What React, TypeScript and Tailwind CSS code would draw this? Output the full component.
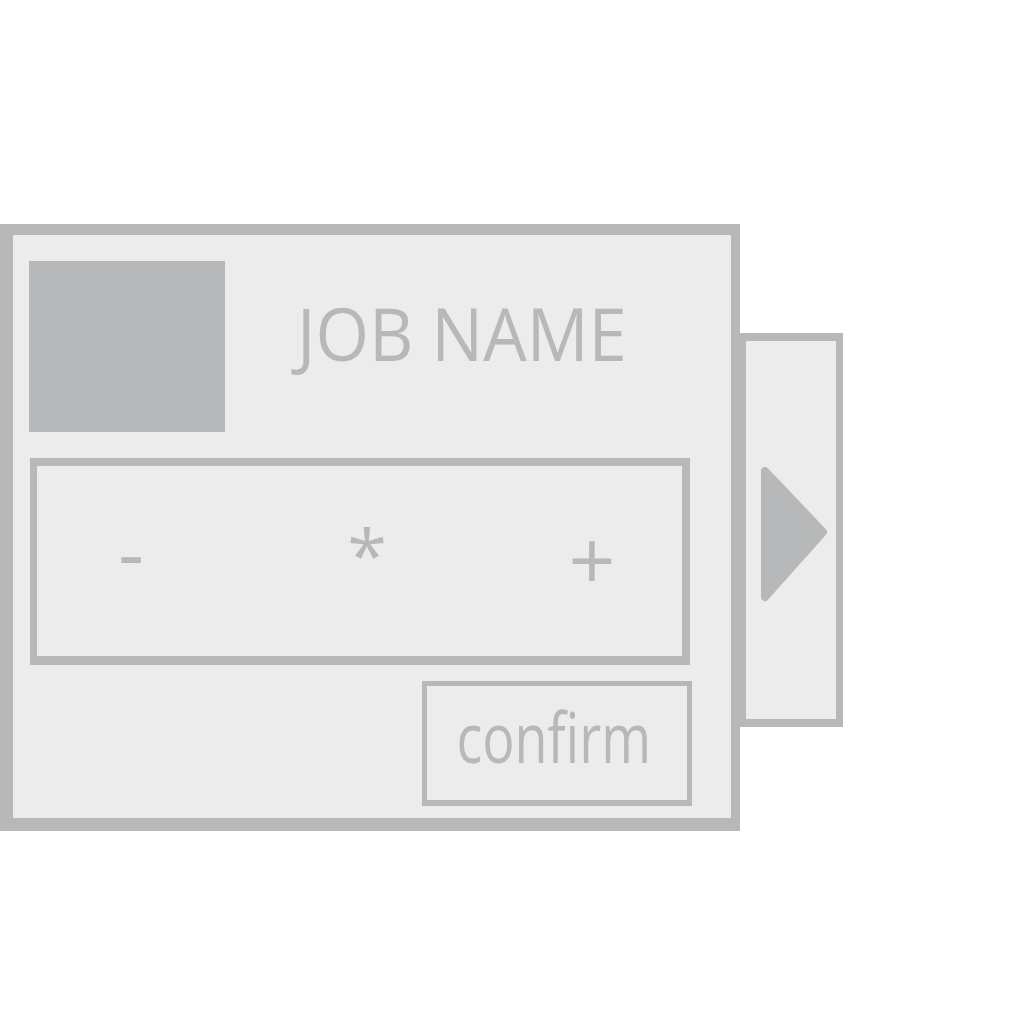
export default function App() {
  return (
    <div className="min-h-screen bg-white pt-[224px] font-['Open_Sans',sans-serif] text-[#b7b8b9]">
      <div className="flex items-start">
        {/* job card */}
        <div className="flex h-[607px] w-[740px] flex-col border-t-[11px] border-r-[9px] border-b-[13px] border-l-[13px] border-[#b7b8b9] bg-[#ececec]">
          <div className="flex pt-[26px] pl-4">
            <div className="h-[171px] w-[196px] bg-[#b7b8b9]" />
            <div className="ml-[72px] mt-[35px] origin-left scale-x-[0.93] text-[74px] leading-none">JOB NAME</div>
          </div>

          <div className="mt-[26px] ml-[17px] flex h-[207px] w-[660px] items-center border-t-8 border-r-8 border-b-[9px] border-l-[7px] border-[#b7b8b9]">
            <span className="mb-[20px] ml-[64px] w-[60px] text-center text-[80px] leading-none">-</span>
            <span className="mb-[16px] ml-[176px] w-[60px] text-center text-[72px] leading-none">*</span>
            <span className="mb-[6px] ml-[165px] w-[60px] text-center text-[82px] leading-none">+</span>
          </div>

          <div className="mt-4 ml-[409px] flex h-[125px] w-[270px] items-center justify-center border-[5px] border-b-[6px] border-[#b7b8b9] pb-[14px]">
            <span className="ml-[-6px] inline-block scale-x-[0.78] text-[69px] leading-none">confirm</span>
          </div>
        </div>

        {/* side tab */}
        <div className="mt-[109px] flex h-[394px] w-[103px] items-center justify-center border-[7px] border-t-8 border-b-8 border-l-[6px] border-[#b7b8b9] bg-[#ececec]">
          <svg width="72" height="140" viewBox="0 0 72 140" className="ml-[8px] mt-[12px]">
            <polygon points="6,5 64,66 6,131" fill="#b7b8b9" stroke="#b7b8b9" strokeWidth="8" strokeLinejoin="round" />
          </svg>
        </div>
      </div>
    </div>
  );
}
